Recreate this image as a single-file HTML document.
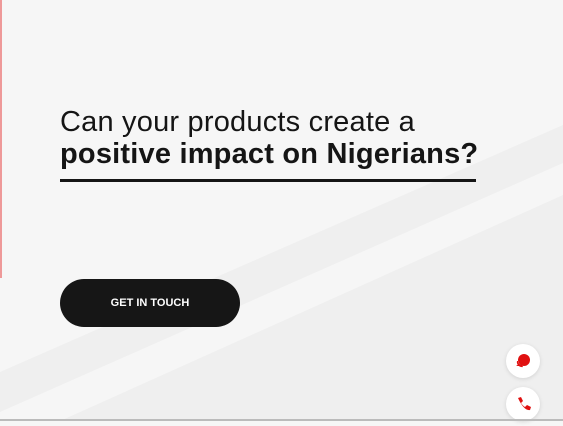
<!DOCTYPE html>
<html><head><meta charset="utf-8"><style>
html,body{margin:0;padding:0;}
body{width:563px;height:421px;position:relative;overflow:hidden;background:#f6f6f6;font-family:"Liberation Sans",sans-serif;}
svg.bg{position:absolute;left:0;top:0;}
.l1{position:absolute;left:60px;top:106px;font-size:29px;color:#151515;letter-spacing:0.2px;white-space:nowrap;}
.l2{position:absolute;left:60px;top:138px;font-size:29px;font-weight:bold;color:#151515;white-space:nowrap;letter-spacing:0.2px;}
.ul{position:absolute;left:60px;top:179px;width:416px;height:3px;background:#151515;}
.btn{position:absolute;left:60px;top:279px;width:180px;height:48px;border-radius:24px;background:#161616;color:#fff;font-size:11px;font-weight:bold;text-align:center;line-height:48px;}
.c{position:absolute;width:34px;height:34px;border-radius:50%;background:#fff;box-shadow:0 1px 4px rgba(0,0,0,.12);}
.red{position:absolute;left:0;top:0;width:2px;height:278px;background:#e99;}
.bot{position:absolute;left:0;top:419px;width:563px;height:2px;background:#bbb;}
</style></head><body>
<svg class="bg" width="563" height="421">
<polygon points="0,372 563,125 563,163 0,412" fill="#efefef"/>
<polygon points="60,421 563,195 563,421" fill="#efefef"/>
</svg>
<div class="red"></div>
<div class="l1">Can your products create a</div>
<div class="l2">positive impact on Nigerians?</div>
<div class="ul"></div>
<div class="btn">GET IN TOUCH</div>
<div class="c" style="left:506px;top:344px;"><svg width="34" height="34" viewBox="0 0 34 34"><circle cx="18" cy="16" r="6" fill="#e01010"/><path d="M11 17 a5 5 0 0 0 6 6 l-1 -2 a4 4 0 0 1 -4 -4z" fill="#e01010"/><path d="M10 22 l3 -2 l1 2z" fill="#e01010"/></svg></div>
<div class="c" style="left:506px;top:387px;"><svg width="34" height="34" viewBox="0 0 34 34"><path d="M12 11 l3 -1 l2 4 l-2 2 q2 3 4 4 l2 -2 l4 2 l-1 3 q-6 1 -12 -12z" fill="#e01010"/></svg></div>
<div class="bot"></div>
</body></html>
